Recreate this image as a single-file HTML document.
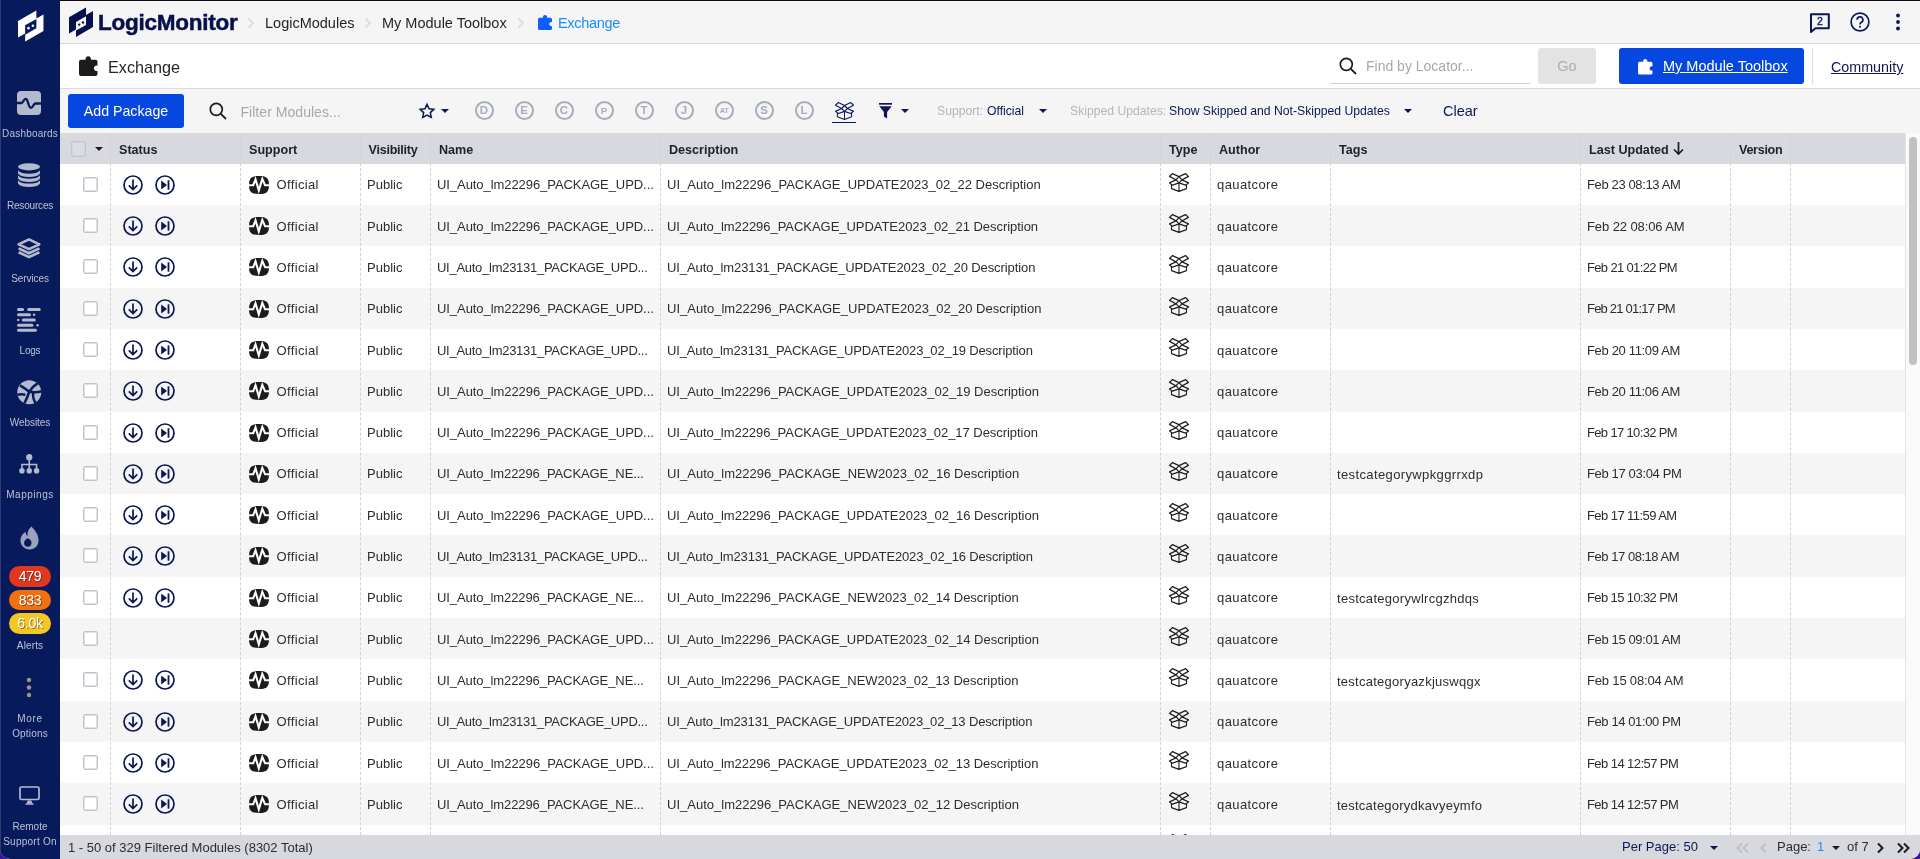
<!DOCTYPE html>
<html lang="en">
<head>
<meta charset="utf-8">
<title>Exchange - LogicMonitor</title>
<style>
*{box-sizing:border-box;margin:0;padding:0}
html,body{width:1920px;height:859px;overflow:hidden;background:#3f10a6;font-family:"Liberation Sans",sans-serif;color:#2b2d33}
#app{will-change:transform;position:absolute;left:0;top:0;width:1920px;height:859px;overflow:hidden;border-radius:0 0 10px 10px;background:#fff}
svg{position:absolute;overflow:visible}
#side{position:absolute;left:0;top:0;width:60px;height:859px;background:#071b5c}
#side .edge{position:absolute;left:0;top:0;width:1px;height:859px;background:#2a3a75}
#side .lbl{margin-top:1px;position:absolute;left:0;width:60px;text-align:center;font-size:10px;color:#bcc1d3;line-height:14.5px;letter-spacing:0}
#side .pill{position:absolute;left:9px;width:42px;height:20.5px;border-radius:10.5px;color:#fff;font-size:14px;line-height:21px;letter-spacing:-.3px;text-align:center;text-shadow:1px 1px 0 rgba(40,40,60,.55)}
#top{position:absolute;left:60px;top:0;width:1860px;height:44px;background:#f5f5f5;border-top:1px solid #0c0c10;border-bottom:1px solid #d3d6de}
#top .brand{position:absolute;left:38px;top:8px;font-size:22.5px;font-weight:bold;color:#05104d;letter-spacing:-0.25px;line-height:28px;-webkit-text-stroke:0.5px #05104d}
#top .bc{position:absolute;top:13px;font-size:14.5px;line-height:18px;color:#1f2127;white-space:nowrap}
#top .bc.act{color:#1a8cff}
#title{position:absolute;left:60px;top:44px;width:1860px;height:45px;background:#fff;border-bottom:1px solid #d9dbe1}
#title h1{position:absolute;left:48px;top:11.800px;font-size:16.200px;font-weight:normal;line-height:22px;color:#24262b}
#tool{position:absolute;left:60px;top:89px;width:1860px;height:44px;background:#f5f5f5}
.btn{position:absolute;background:#0547df;color:#fff;border-radius:3px;text-align:center;white-space:nowrap}
.ph{position:absolute;color:#a6a8ae;white-space:nowrap}
.circ{position:absolute;top:12px;width:19px;height:19px;border:2px solid #a6acbb;border-radius:50%;color:#a6acbb;font-size:11.5px;line-height:15.5px;text-align:center;font-weight:bold}
.tri{position:absolute;width:0;height:0;border-left:4px solid transparent;border-right:4px solid transparent;border-top:4px solid #0b1656}
#thead{position:absolute;left:60px;top:133px;width:1845px;height:31px;background:#d8d9de}
#thead span{position:absolute;top:8.5px;font-size:12.6px;font-weight:bold;line-height:16px;color:#20232b;white-space:nowrap}
#rows{position:absolute;left:60px;top:164px;width:1845px;height:671px;overflow:hidden;background:#fff}
.row{position:absolute;left:0;width:1845px;height:42px;background:#fff}
.row.s1 .c{margin-top:1px}
.row.s1 .c.tg{margin-top:2px}
.row.alt{background:#f5f5f5}
.row .c{position:absolute;top:13px;font-size:13px;line-height:16px;white-space:nowrap;color:#2b2d33}
.cb{position:absolute;left:23px;top:13px;width:15px;height:15px;border:1px solid #c0c4cd;box-shadow:inset 0 0 0 1px #dfe1e6;border-radius:2px;background:#fff}
.row .ic{left:63px;top:10.5px;width:20px;height:20px}
.row .ic.sk{left:95px}
.row .lmb{left:189px;top:11.5px;width:20px;height:18px}
.row .bx{left:1109px;top:9px;width:20px;height:19px}
.c.sup{left:216.5px;letter-spacing:.35px}.c.vis{left:307px}.c.nm{left:377px}.c.ds{left:607px}.c.au{left:1157px;letter-spacing:.4px}.c.tg{left:1277px;margin-top:1px}.c.dt{left:1527px}
.vl{position:absolute;top:133px;width:0;height:702px;border-left:1px dashed #cfd1d6}
#foot{position:absolute;left:60px;top:835px;width:1860px;height:24px;background:#d8d9de;font-size:13px;color:#2b2d33}
#foot span{position:absolute;top:4px;line-height:16px;white-space:nowrap}
#sb{position:absolute;left:1905px;top:133px;width:15px;height:702px;background:#fafafa;border-left:1px solid #e4e4e4}
#sb i{position:absolute;left:3px;top:4px;width:8px;height:228px;border-radius:4px;background:#c1c1c1}
</style>
</head>
<body>
<div id="app">
<svg width="0" height="0" style="display:none">
<defs>
<symbol id="i-dl" viewBox="0 0 20 20"><circle cx="10" cy="10" r="9" fill="none" stroke="#0b1656" stroke-width="1.700"/><path d="M10 4.600v9.800M5.800 10.300 10 14.500l4.200-4.200" fill="none" stroke="#0b1656" stroke-width="1.700"/></symbol>
<symbol id="i-sk" viewBox="0 0 20 20"><circle cx="10" cy="10" r="9" fill="none" stroke="#0b1656" stroke-width="1.700"/><path d="M6.200 5.500v9l5.800-4.500z" fill="#0b1656"/><path d="M13.500 5.300v9.400" stroke="#0b1656" stroke-width="1.800"/></symbol>
<symbol id="i-lm" viewBox="0 0 20 18"><path d="M10 0C17.200 0 20 1.600 20 9S17.200 18 10 18 0 16.400 0 9 2.800 0 10 0z" fill="#1c1c1e"/><path d="M0 9.300h4.200L6.500 3.300l3.300 11L13.300 2.900l2.800 6.400H20" fill="none" stroke="#fff" stroke-width="2.100" stroke-linejoin="miter"/></symbol>
<symbol id="i-box" viewBox="0 2.300 20 16.700" preserveAspectRatio="none"><g fill="none" stroke="#1c1c1e" stroke-width="1.1" stroke-linejoin="round"><path d="M10 5.500 3.500 2.800.5 5.300 7 8.300zM10 5.500l6.500-2.700 3 2.500-6.500 3zM10 11 7 8.300.5 11 3.500 13zM10 11l3-2.700 6.500 2.700-3 2zM10 11v7.500M2.500 12.300V16l7.500 2.500 7.500-2.500v-3.700"/></g></symbol>
</defs>
</svg>
<div id="side"><div class="edge"></div>
<svg style="left:17.300px;top:9.300px" width="27.500" height="33.500" viewBox="0 0 27 32" preserveAspectRatio="none"><path d="M1 11.500 19 1.500v7.500l7-3.800v15.800L8 31v-7.500l-7 3.800z" fill="#fff"/><path d="M8 15.500 19 9.500v9L8 24.500z" fill="#071b5c"/><circle cx="11.300" cy="18.300" r="1.250" fill="#fff"/><circle cx="15.600" cy="16" r="1.250" fill="#fff"/></svg>
<svg style="left:17px;top:91px" width="24" height="24" viewBox="0 0 24 24"><rect x="0" y="0" width="24" height="24" rx="4" fill="#b4bace"/><path d="M0 12h4.500c1.800 0 2-4.200 4.200-4.200 2.800 0 2.300 9 5.300 9 2.300 0 2-4.300 4.500-4.300H24" fill="none" stroke="#071b5c" stroke-width="2.300"/></svg>
<div class="lbl" style="top:126px;letter-spacing:0.21px">Dashboards</div>
<svg style="left:18px;top:163px" width="22" height="24" viewBox="0 0 22 24"><g fill="#b4bace"><ellipse cx="11" cy="3.800" rx="11" ry="3.600"/><path d="M0 7.3c2 2.600 6 3.400 11 3.400s9-.8 11-3.400v3.300c-2 2.600-6 3.400-11 3.400s-9-.8-11-3.400z"/><path d="M0 12.3c2 2.600 6 3.400 11 3.400s9-.8 11-3.400v3.300c-2 2.600-6 3.400-11 3.400s-9-.8-11-3.400z"/><path d="M0 17.2c2 2.600 6 3.400 11 3.400s9-.8 11-3.400v3.300c-2 2.600-6 3.400-11 3.400s-9-.8-11-3.400z"/></g></svg>
<div class="lbl" style="top:198px;letter-spacing:-0.18px">Resources</div>
<svg style="left:17px;top:238px" width="24" height="21.500" viewBox="0 0 24 21.500"><g fill="none" stroke="#b4bace" stroke-linejoin="round"><path d="M12 1.400 22.400 6.300 12 11.200 1.600 6.300z" stroke-width="2.500"/><path d="M1.600 10.400 12 15.300l10.400-4.900M1.600 14.200 12 19.100l10.400-4.900" stroke-width="2.700"/></g></svg>
<div class="lbl" style="top:271px;letter-spacing:-0.08px">Services</div>
<svg style="left:17px;top:307px" width="24" height="26" viewBox="0 0 24 26"><g stroke="#b4bace" stroke-width="3" stroke-linecap="round"><path d="M1.500 2.400h4.100M11.700 2.400h10.600M1.500 7.700h11M6.300 13h11M1.500 18.300h13.500M1.500 23.300h17"/></g><g fill="#b4bace"><circle cx="17.100" cy="7.700" r="1.200"/><circle cx="1.300" cy="13" r="1.200"/><circle cx="20.600" cy="18.300" r="1.200"/></g></svg>
<div class="lbl" style="top:343px;letter-spacing:-0.23px">Logs</div>
<svg style="left:17px;top:379.500px" width="24.500" height="24.500" viewBox="0 0 25 25"><circle cx="12.500" cy="12.500" r="12.200" fill="#b4bace"/><g fill="none" stroke="#071b5c" stroke-width="2.600"><path d="M3 5.500c3.500 2 6.500 4 9.500 6.500M21 3.500c-3.500 2-6 4.500-8.500 8.500M12.500 12c-1.500 4.500-3 8-5 12M12.500 12c3.500.5 8 1 12.500-.5M16.500 13c-.5 4 .5 7.500 2.500 10.500M.5 15c2.500-.5 5-.5 8 0"/></g></svg>
<div class="lbl" style="top:415px;letter-spacing:-0.06px">Websites</div>
<svg style="left:18.500px;top:453.700px" width="20.500" height="20.300" viewBox="0 0 21 20" preserveAspectRatio="none"><g fill="#b4bace"><circle cx="10.500" cy="3.300" r="3.200"/><circle cx="3" cy="16.500" r="2.800"/><circle cx="10.500" cy="16.500" r="2.800"/><circle cx="18" cy="16.500" r="2.800"/></g><path d="M10.500 5v11M3 15.500v-5.200h15v5.200" fill="none" stroke="#b4bace" stroke-width="1.600"/></svg>
<div class="lbl" style="top:487px;letter-spacing:0.52px">Mappings</div>
<svg style="left:19.500px;top:525.500px" width="19" height="24" viewBox="0 0 20 25"><path d="M12 .5c3 3.500 7.500 7.500 7.500 14.500 0 5.500-4 9.500-9.500 9.500S.5 20.500.5 15.500C.5 11 3 8 6 6c0 2 .5 3.500 2 4.500C7.500 6.500 9 3 12 .5zM8.200 12.800c-2.300 1-3.900 2.700-3.900 5a3.900 3.900 0 0 0 7.800 0c0-2.600-1.700-4.300-3.900-5z" fill="#9aa2be" fill-rule="evenodd"/></svg>
<div class="pill" style="top:566px;background:#e0371f">479</div>
<div class="pill" style="top:589.7px;background:#f2700d">833</div>
<div class="pill" style="top:613.4px;background:#f4c722">6.0k</div>
<div class="lbl" style="top:638px;letter-spacing:0.13px">Alerts</div>
<svg style="left:26px;top:677px" width="6" height="22" viewBox="0 0 6 22"><g fill="#9f9685"><circle cx="3" cy="3" r="2.200"/><circle cx="3" cy="10.500" r="2.200"/><circle cx="3" cy="18" r="2.200"/></g></svg>
<div class="lbl" style="top:711px"><span style="letter-spacing:0.7px">More</span><br><span style="letter-spacing:0.17px">Options</span></div>
<svg style="left:19px;top:786px" width="21" height="19" viewBox="0 0 21 19"><rect x="1" y="1" width="19" height="12.500" rx="1.500" fill="none" stroke="#b4bace" stroke-width="1.700"/><path d="M8.500 14.500h4l.8 3H7.700z" fill="#b4bace"/><path d="M6.500 18h8" stroke="#b4bace" stroke-width="1.600"/></svg>
<div class="lbl" style="top:819px"><span style="letter-spacing:0.02px">Remote</span><br><span style="letter-spacing:0.25px">Support On</span></div>
</div>
<div id="top">
<svg style="left:9px;top:5.800px" width="24" height="31" viewBox="0 0 24 30" preserveAspectRatio="none"><path d="M0 10 17 .5v7.200l7-3.900v15.500L7 29v-7.200l-7 3.900z" fill="#05104d"/><path d="M7 14.500 17 9v8.300L7 22.800z" fill="#f5f5f5"/><circle cx="10.200" cy="17" r="1.150" fill="#05104d"/><circle cx="14" cy="15" r="1.150" fill="#05104d"/></svg>
<div class="brand">LogicMonitor</div>
<svg style="left:187px;top:16px" width="8" height="12" viewBox="0 0 8 12"><path d="M1.500 1.500 6 6l-4.500 4.500" fill="none" stroke="#dcdcdc" stroke-width="1.800"/></svg>
<div class="bc" style="left:205px">LogicModules</div>
<svg style="left:304px;top:16px" width="8" height="12" viewBox="0 0 8 12"><path d="M1.500 1.500 6 6l-4.500 4.500" fill="none" stroke="#dcdcdc" stroke-width="1.800"/></svg>
<div class="bc" style="left:322px">My Module Toolbox</div>
<svg style="left:457px;top:16px" width="8" height="12" viewBox="0 0 8 12"><path d="M1.500 1.500 6 6l-4.500 4.500" fill="none" stroke="#dcdcdc" stroke-width="1.800"/></svg>
<svg style="left:478px;top:13.300px" width="14" height="16" viewBox="0 0 14 16"><path d="M1.500 3.700h3.500a2.100 2.100 0 1 1 4 0h3.500a1.500 1.500 0 0 1 1.500 1.500v2.900a2.100 2.100 0 1 0 0 4v2.400a1.500 1.500 0 0 1-1.500 1.500h-11A1.500 1.500 0 0 1 0 14.500V5.200a1.500 1.500 0 0 1 1.500-1.500z" fill="#0d5fff"/></svg>
<div class="bc act" style="left:498px;top:12.500px;letter-spacing:-.3px">Exchange</div>
<svg style="left:1749px;top:11.200px" width="22" height="22" viewBox="0 0 22 22"><path d="M2 2.200h17.800v14H6.500L2 20z" fill="none" stroke="#0b1656" stroke-width="2" stroke-linejoin="round"/><text x="11" y="13.400" font-family="Liberation Sans, sans-serif" font-size="10.500" fill="#0b1656" stroke="#0b1656" stroke-width=".35" text-anchor="middle">2</text></svg>
<svg style="left:1789.8px;top:11.3px" width="20" height="20" viewBox="0 0 22 22"><circle cx="11" cy="11" r="9.800" fill="none" stroke="#0b1656" stroke-width="1.800"/><path d="M7.800 8.600a3.200 3.200 0 1 1 4.800 2.700c-1 .6-1.600 1.200-1.600 2.400" fill="none" stroke="#0b1656" stroke-width="1.800"/><circle cx="11" cy="16.300" r="1.150" fill="#0b1656"/></svg>
<svg style="left:1835px;top:12px" width="6" height="18" viewBox="0 0 6 18"><g fill="#0b1656"><circle cx="3" cy="2.500" r="1.900"/><circle cx="3" cy="9" r="1.900"/><circle cx="3" cy="15.500" r="1.900"/></g></svg>
</div>
<div id="title">
<svg style="left:19px;top:11px" width="18.500" height="21" viewBox="0 0 14 16" preserveAspectRatio="none"><path d="M1.500 3.700h3.500a2.100 2.100 0 1 1 4 0h3.500a1.500 1.500 0 0 1 1.500 1.500v2.900a2.100 2.100 0 1 0 0 4v2.400a1.500 1.500 0 0 1-1.500 1.500h-11A1.500 1.500 0 0 1 0 14.500V5.200a1.500 1.500 0 0 1 1.500-1.500z" fill="#1c1c1e"/></svg>
<h1>Exchange</h1>
<svg style="left:1279px;top:13px" width="18" height="18" viewBox="0 0 18 18"><circle cx="7.300" cy="7.300" r="6" fill="none" stroke="#1c1c1e" stroke-width="1.700"/><path d="M11.800 11.800 17 17" stroke="#1c1c1e" stroke-width="1.800"/></svg>
<div class="ph" style="left:1306px;top:13px;font-size:14px;line-height:18px">Find by Locator...</div>
<div style="position:absolute;left:1270px;top:39px;width:200px;height:1px;background:#cdd2da"></div>
<div style="position:absolute;left:1478px;top:4px;width:58px;height:36px;border-radius:3px;background:#e3e3e3;color:#adadb2;font-size:14.5px;line-height:36px;text-align:center">Go</div>
<div class="btn" style="left:1559px;top:4px;width:185px;height:36px"><svg style="left:18.500px;top:9.500px" width="14.500" height="16.500" viewBox="0 0 14 16"><path d="M1.500 3.700h3.500a2.100 2.100 0 1 1 4 0h3.500a1.500 1.500 0 0 1 1.500 1.500v2.900a2.100 2.100 0 1 0 0 4v2.400a1.500 1.500 0 0 1-1.500 1.500h-11A1.500 1.500 0 0 1 0 14.500V5.200a1.500 1.500 0 0 1 1.500-1.500z" fill="#fff"/></svg><span style="position:absolute;left:44px;top:9px;font-size:14.5px;line-height:18px;text-decoration:underline">My Module Toolbox</span></div>
<div style="position:absolute;left:1752px;top:4px;width:1px;height:36px;background:#d9dbe1"></div>
<div style="position:absolute;left:1771px;top:14px;font-size:14.300px;line-height:18px;color:#0b1656;text-decoration:underline">Community</div>
</div>
<div id="tool">
<div class="btn" style="left:8px;top:5px;width:116px;height:34px;font-size:14.200px;line-height:34px">Add Package</div>
<svg style="left:149px;top:13px" width="18" height="18" viewBox="0 0 18 18"><circle cx="7.300" cy="7.300" r="6" fill="none" stroke="#1c1c1e" stroke-width="1.700"/><path d="M11.800 11.800 17 17" stroke="#1c1c1e" stroke-width="1.800"/></svg>
<div class="ph" style="left:180.500px;top:14px;font-size:14.100px;line-height:18px">Filter Modules...</div>
<svg style="left:358.5px;top:13.5px" width="16" height="16" viewBox="0 0 18 18"><path d="M9 1.500l2.300 5 5.400.6-4 3.700 1.100 5.400L9 13.500l-4.800 2.700 1.100-5.400-4-3.700 5.400-.6z" fill="none" stroke="#0b1656" stroke-width="1.700" stroke-linejoin="miter"/></svg>
<div class="tri" style="left:381px;top:20px"></div>
<div class="circ" style="left:414.5px">D</div>
<div class="circ" style="left:454.5px">E</div>
<div class="circ" style="left:494.5px">C</div>
<div class="circ" style="left:534.5px;font-size:9.500px">P</div>
<div class="circ" style="left:574.5px">T</div>
<div class="circ" style="left:614.5px">J</div>
<div class="circ" style="left:654.5px;font-size:7.500px;letter-spacing:-.5px">AT</div>
<div class="circ" style="left:694.5px">S</div>
<div class="circ" style="left:734.5px">L</div>
<svg style="left:774.5px;top:12.5px" width="19" height="18" viewBox="0 2.300 20 16.700" preserveAspectRatio="none"><g fill="none" stroke="#0b1656" stroke-width="1.100" stroke-linejoin="round"><path d="M10 5.500 3.500 2.800.5 5.300 7 8.300zM10 5.500l6.500-2.700 3 2.500-6.500 3zM10 11 7 8.300.5 11 3.500 13zM10 11l3-2.700 6.500 2.700-3 2zM10 11v7.500M2.500 12.300V16l7.500 2.500 7.500-2.500v-3.700"/></g></svg>
<div style="position:absolute;left:772px;top:32.500px;width:24px;height:1px;background:#0b1656"></div>
<svg style="left:819px;top:14px" width="13" height="16" viewBox="0 0 13 16"><path d="M0 0h13v1.700H0z" fill="#0b1656"/><path d="M.300 3.300h12.400L8.100 9v6.500L4.900 13.500V9z" fill="#0b1656"/></svg>
<div class="tri" style="left:841px;top:20px"></div>
<div class="ph" style="left:877px;top:14.5px;font-size:12.2px;line-height:15px;color:#b3b5bb">Support:</div>
<div class="ph" style="left:927px;top:14.5px;font-size:12.2px;line-height:15px;color:#0b1656">Official</div>
<div class="tri" style="left:979px;top:20px"></div>
<div class="ph" style="left:1010px;top:14.5px;font-size:12.2px;line-height:15px;color:#b3b5bb">Skipped Updates:</div>
<div class="ph" style="left:1109px;top:14.5px;font-size:12.2px;line-height:15px;color:#0b1656">Show Skipped and Not-Skipped Updates</div>
<div class="tri" style="left:1344px;top:20px"></div>
<div class="ph" style="left:1383px;top:13px;font-size:14.500px;line-height:18px;color:#0b1656">Clear</div>
</div>
<div id="thead">
<div class="cb" style="left:11px;top:8px;height:16px;background:#dcdde2;border-color:#c3c6ce;box-shadow:inset 0 0 0 1px #d2d4da"></div>
<div class="tri" style="left:35px;top:14px;border-top-color:#1c1c1e;border-left-width:4px;border-right-width:4px;border-top-width:4.500px"></div>
<span style="left:59px">Status</span><span style="left:189px">Support</span><span style="left:308.500px;letter-spacing:-.25px">Visibility</span><span style="left:379px">Name</span><span style="left:609px">Description</span><span style="left:1109px">Type</span><span style="left:1159px">Author</span><span style="left:1279px">Tags</span><span style="left:1529px">Last Updated</span>
<svg style="left:1613px;top:8px" width="11" height="15" viewBox="0 0 11 15"><path d="M5.500 1v12M1 8.500 5.500 13 10 8.500" fill="none" stroke="#1c1c1e" stroke-width="1.700"/></svg>
<span style="left:1679px;letter-spacing:-.3px">Version</span>
</div>
<div id="rows">
<div class="row" style="top:0px"><span class="cb"></span><svg class="ic dl"><use href="#i-dl"/></svg><svg class="ic sk"><use href="#i-sk"/></svg><svg class="lmb"><use href="#i-lm"/></svg><span class="c sup">Official</span><span class="c vis">Public</span><span class="c nm" style="letter-spacing:-0.066px">UI_Auto_lm22296_PACKAGE_UPD...</span><span class="c ds" style="letter-spacing:0.011px">UI_Auto_lm22296_PACKAGE_UPDATE2023_02_22 Description</span><svg class="bx"><use href="#i-box"/></svg><span class="c au">qauatcore</span><span class="c dt" style="letter-spacing:-0.373px">Feb 23 08:13 AM</span></div>
<div class="row alt s1" style="top:41px"><span class="cb"></span><svg class="ic dl"><use href="#i-dl"/></svg><svg class="ic sk"><use href="#i-sk"/></svg><svg class="lmb"><use href="#i-lm"/></svg><span class="c sup">Official</span><span class="c vis">Public</span><span class="c nm" style="letter-spacing:-0.066px">UI_Auto_lm22296_PACKAGE_UPD...</span><span class="c ds" style="letter-spacing:-0.040px">UI_Auto_lm22296_PACKAGE_UPDATE2023_02_21 Description</span><svg class="bx"><use href="#i-box"/></svg><span class="c au">qauatcore</span><span class="c dt" style="letter-spacing:-0.094px">Feb 22 08:06 AM</span></div>
<div class="row s1" style="top:82px"><span class="cb"></span><svg class="ic dl"><use href="#i-dl"/></svg><svg class="ic sk"><use href="#i-sk"/></svg><svg class="lmb"><use href="#i-lm"/></svg><span class="c sup">Official</span><span class="c vis">Public</span><span class="c nm" style="letter-spacing:-0.273px">UI_Auto_lm23131_PACKAGE_UPD...</span><span class="c ds" style="letter-spacing:-0.093px">UI_Auto_lm23131_PACKAGE_UPDATE2023_02_20 Description</span><svg class="bx"><use href="#i-box"/></svg><span class="c au">qauatcore</span><span class="c dt" style="letter-spacing:-0.652px">Feb 21 01:22 PM</span></div>
<div class="row alt" style="top:124px"><span class="cb"></span><svg class="ic dl"><use href="#i-dl"/></svg><svg class="ic sk"><use href="#i-sk"/></svg><svg class="lmb"><use href="#i-lm"/></svg><span class="c sup">Official</span><span class="c vis">Public</span><span class="c nm" style="letter-spacing:-0.066px">UI_Auto_lm22296_PACKAGE_UPD...</span><span class="c ds" style="letter-spacing:0.025px">UI_Auto_lm22296_PACKAGE_UPDATE2023_02_20 Description</span><svg class="bx"><use href="#i-box"/></svg><span class="c au">qauatcore</span><span class="c dt" style="letter-spacing:-0.788px">Feb 21 01:17 PM</span></div>
<div class="row s1" style="top:165px"><span class="cb"></span><svg class="ic dl"><use href="#i-dl"/></svg><svg class="ic sk"><use href="#i-sk"/></svg><svg class="lmb"><use href="#i-lm"/></svg><span class="c sup">Official</span><span class="c vis">Public</span><span class="c nm" style="letter-spacing:-0.273px">UI_Auto_lm23131_PACKAGE_UPD...</span><span class="c ds" style="letter-spacing:-0.142px">UI_Auto_lm23131_PACKAGE_UPDATE2023_02_19 Description</span><svg class="bx"><use href="#i-box"/></svg><span class="c au">qauatcore</span><span class="c dt" style="letter-spacing:-0.339px">Feb 20 11:09 AM</span></div>
<div class="row alt s1" style="top:206px"><span class="cb"></span><svg class="ic dl"><use href="#i-dl"/></svg><svg class="ic sk"><use href="#i-sk"/></svg><svg class="lmb"><use href="#i-lm"/></svg><span class="c sup">Official</span><span class="c vis">Public</span><span class="c nm" style="letter-spacing:-0.066px">UI_Auto_lm22296_PACKAGE_UPD...</span><span class="c ds" style="letter-spacing:-0.024px">UI_Auto_lm22296_PACKAGE_UPDATE2023_02_19 Description</span><svg class="bx"><use href="#i-box"/></svg><span class="c au">qauatcore</span><span class="c dt" style="letter-spacing:-0.339px">Feb 20 11:06 AM</span></div>
<div class="row" style="top:248px"><span class="cb"></span><svg class="ic dl"><use href="#i-dl"/></svg><svg class="ic sk"><use href="#i-sk"/></svg><svg class="lmb"><use href="#i-lm"/></svg><span class="c sup">Official</span><span class="c vis">Public</span><span class="c nm" style="letter-spacing:-0.066px">UI_Auto_lm22296_PACKAGE_UPD...</span><span class="c ds" style="letter-spacing:-0.044px">UI_Auto_lm22296_PACKAGE_UPDATE2023_02_17 Description</span><svg class="bx"><use href="#i-box"/></svg><span class="c au">qauatcore</span><span class="c dt" style="letter-spacing:-0.652px">Feb 17 10:32 PM</span></div>
<div class="row alt" style="top:289px"><span class="cb"></span><svg class="ic dl"><use href="#i-dl"/></svg><svg class="ic sk"><use href="#i-sk"/></svg><svg class="lmb"><use href="#i-lm"/></svg><span class="c sup">Official</span><span class="c vis">Public</span><span class="c nm" style="letter-spacing:-0.087px">UI_Auto_lm22296_PACKAGE_NE...</span><span class="c ds" style="letter-spacing:0.011px">UI_Auto_lm22296_PACKAGE_NEW2023_02_16 Description</span><svg class="bx"><use href="#i-box"/></svg><span class="c au">qauatcore</span><span class="c tg" style="letter-spacing:0.375px">testcategorywpkggrrxdp</span><span class="c dt" style="letter-spacing:-0.352px">Feb 17 03:04 PM</span></div>
<div class="row s1" style="top:330px"><span class="cb"></span><svg class="ic dl"><use href="#i-dl"/></svg><svg class="ic sk"><use href="#i-sk"/></svg><svg class="lmb"><use href="#i-lm"/></svg><span class="c sup">Official</span><span class="c vis">Public</span><span class="c nm" style="letter-spacing:-0.066px">UI_Auto_lm22296_PACKAGE_UPD...</span><span class="c ds" style="letter-spacing:-0.024px">UI_Auto_lm22296_PACKAGE_UPDATE2023_02_16 Description</span><svg class="bx"><use href="#i-box"/></svg><span class="c au">qauatcore</span><span class="c dt" style="letter-spacing:-0.568px">Feb 17 11:59 AM</span></div>
<div class="row alt s1" style="top:371px"><span class="cb"></span><svg class="ic dl"><use href="#i-dl"/></svg><svg class="ic sk"><use href="#i-sk"/></svg><svg class="lmb"><use href="#i-lm"/></svg><span class="c sup">Official</span><span class="c vis">Public</span><span class="c nm" style="letter-spacing:-0.273px">UI_Auto_lm23131_PACKAGE_UPD...</span><span class="c ds" style="letter-spacing:-0.142px">UI_Auto_lm23131_PACKAGE_UPDATE2023_02_16 Description</span><svg class="bx"><use href="#i-box"/></svg><span class="c au">qauatcore</span><span class="c dt" style="letter-spacing:-0.458px">Feb 17 08:18 AM</span></div>
<div class="row" style="top:413px"><span class="cb"></span><svg class="ic dl"><use href="#i-dl"/></svg><svg class="ic sk"><use href="#i-sk"/></svg><svg class="lmb"><use href="#i-lm"/></svg><span class="c sup">Official</span><span class="c vis">Public</span><span class="c nm" style="letter-spacing:-0.087px">UI_Auto_lm22296_PACKAGE_NE...</span><span class="c ds" style="letter-spacing:0.002px">UI_Auto_lm22296_PACKAGE_NEW2023_02_14 Description</span><svg class="bx"><use href="#i-box"/></svg><span class="c au">qauatcore</span><span class="c tg" style="letter-spacing:0.284px">testcategorywlrcgzhdqs</span><span class="c dt" style="letter-spacing:-0.617px">Feb 15 10:32 PM</span></div>
<div class="row alt s1" style="top:454px"><span class="cb"></span><svg class="lmb"><use href="#i-lm"/></svg><span class="c sup">Official</span><span class="c vis">Public</span><span class="c nm" style="letter-spacing:-0.066px">UI_Auto_lm22296_PACKAGE_UPD...</span><span class="c ds" style="letter-spacing:-0.024px">UI_Auto_lm22296_PACKAGE_UPDATE2023_02_14 Description</span><svg class="bx"><use href="#i-box"/></svg><span class="c au">qauatcore</span><span class="c dt" style="letter-spacing:-0.373px">Feb 15 09:01 AM</span></div>
<div class="row s1" style="top:495px"><span class="cb"></span><svg class="ic dl"><use href="#i-dl"/></svg><svg class="ic sk"><use href="#i-sk"/></svg><svg class="lmb"><use href="#i-lm"/></svg><span class="c sup">Official</span><span class="c vis">Public</span><span class="c nm" style="letter-spacing:-0.087px">UI_Auto_lm22296_PACKAGE_NE...</span><span class="c ds" style="letter-spacing:-0.006px">UI_Auto_lm22296_PACKAGE_NEW2023_02_13 Description</span><svg class="bx"><use href="#i-box"/></svg><span class="c au">qauatcore</span><span class="c tg" style="letter-spacing:0.256px">testcategoryazkjuswqgx</span><span class="c dt" style="letter-spacing:-0.173px">Feb 15 08:04 AM</span></div>
<div class="row alt" style="top:537px"><span class="cb"></span><svg class="ic dl"><use href="#i-dl"/></svg><svg class="ic sk"><use href="#i-sk"/></svg><svg class="lmb"><use href="#i-lm"/></svg><span class="c sup">Official</span><span class="c vis">Public</span><span class="c nm" style="letter-spacing:-0.273px">UI_Auto_lm23131_PACKAGE_UPD...</span><span class="c ds" style="letter-spacing:-0.151px">UI_Auto_lm23131_PACKAGE_UPDATE2023_02_13 Description</span><svg class="bx"><use href="#i-box"/></svg><span class="c au">qauatcore</span><span class="c dt" style="letter-spacing:-0.402px">Feb 14 01:00 PM</span></div>
<div class="row s1" style="top:578px"><span class="cb"></span><svg class="ic dl"><use href="#i-dl"/></svg><svg class="ic sk"><use href="#i-sk"/></svg><svg class="lmb"><use href="#i-lm"/></svg><span class="c sup">Official</span><span class="c vis">Public</span><span class="c nm" style="letter-spacing:-0.066px">UI_Auto_lm22296_PACKAGE_UPD...</span><span class="c ds" style="letter-spacing:-0.034px">UI_Auto_lm22296_PACKAGE_UPDATE2023_02_13 Description</span><svg class="bx"><use href="#i-box"/></svg><span class="c au">qauatcore</span><span class="c dt" style="letter-spacing:-0.567px">Feb 14 12:57 PM</span></div>
<div class="row alt s1" style="top:619px"><span class="cb"></span><svg class="ic dl"><use href="#i-dl"/></svg><svg class="ic sk"><use href="#i-sk"/></svg><svg class="lmb"><use href="#i-lm"/></svg><span class="c sup">Official</span><span class="c vis">Public</span><span class="c nm" style="letter-spacing:-0.087px">UI_Auto_lm22296_PACKAGE_NE...</span><span class="c ds" style="letter-spacing:0.004px">UI_Auto_lm22296_PACKAGE_NEW2023_02_12 Description</span><svg class="bx"><use href="#i-box"/></svg><span class="c au">qauatcore</span><span class="c tg" style="letter-spacing:0.229px">testcategorydkavyeymfo</span><span class="c dt" style="letter-spacing:-0.567px">Feb 14 12:57 PM</span></div>
<div class="row" style="top:661px"><svg class="bx"><use href="#i-box"/></svg></div>
</div>
<div class="vl" style="left:110px"></div><div class="vl" style="left:240px"></div><div class="vl" style="left:360px"></div><div class="vl" style="left:430px"></div><div class="vl" style="left:660px"></div><div class="vl" style="left:1160px"></div><div class="vl" style="left:1210px"></div><div class="vl" style="left:1330px"></div><div class="vl" style="left:1580px"></div><div class="vl" style="left:1730px"></div><div class="vl" style="left:1790px"></div>
<div id="sb"><i></i></div>
<div id="foot">
<span style="left:8px;top:5px">1 - 50 of 329 Filtered Modules (8302 Total)</span>
<span style="left:1562px;color:#0b1656">Per Page: 50</span>
<div class="tri" style="left:1650px;top:10.500px"></div>
<svg style="left:1676px;top:6.500px" width="14" height="12" viewBox="0 0 14 12"><path d="M6 1.500 1.500 6 6 10.500M12 1.500 7.500 6l4.500 4.500" fill="none" stroke="#b9bbc2" stroke-width="1.700"/></svg>
<svg style="left:1700px;top:6.500px" width="8" height="12" viewBox="0 0 8 12"><path d="M6 1.500 1.500 6 6 10.500" fill="none" stroke="#b9bbc2" stroke-width="1.700"/></svg>
<span style="left:1717px;top:3.500px">Page:</span>
<span style="left:1757px;top:3.500px;color:#1a8cff">1</span>
<div class="tri" style="left:1772px;top:10.500px;border-top-color:#1c1c1e"></div>
<span style="left:1787px;top:3.500px">of 7</span>
<svg style="left:1816px;top:6.500px" width="8" height="12" viewBox="0 0 8 12"><path d="M2 1.500 6.500 6 2 10.500" fill="none" stroke="#1c1c1e" stroke-width="2"/></svg>
<svg style="left:1836px;top:6.500px" width="14" height="12" viewBox="0 0 14 12"><path d="M2 1.500 6.500 6 2 10.500M8 1.500 12.500 6 8 10.500" fill="none" stroke="#1c1c1e" stroke-width="2"/></svg>
</div>
</div>
</body>
</html>
